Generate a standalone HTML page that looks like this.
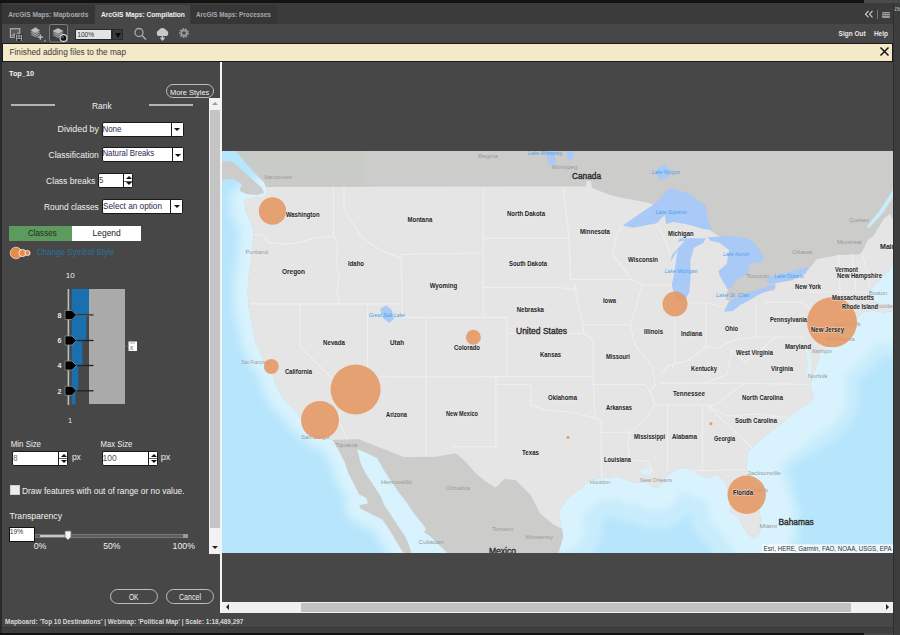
<!DOCTYPE html>
<html><head><meta charset="utf-8">
<style>
*{margin:0;padding:0;box-sizing:border-box}
html,body{width:900px;height:635px;overflow:hidden;background:#474747;font-family:"Liberation Sans",sans-serif}
.a{position:absolute}
.t{position:absolute;white-space:nowrap;line-height:1}
.dd{position:absolute;background:#fff;border:1px solid #1a1a1a;border-radius:2px}
.dd .arr{position:absolute;right:0;top:0;bottom:0;border-left:1px solid #1a1a1a;background:#fff}
.dd .arr:after{content:"";position:absolute;left:50%;top:50%;margin-left:-3px;margin-top:-1px;border-left:3px solid transparent;border-right:3px solid transparent;border-top:3px solid #111}
.dd .v{position:absolute;left:1px;font-size:9.5px;color:#202040;line-height:1}
.spin{position:absolute;right:0;top:0;bottom:0;width:9px;border-left:1px solid #1a1a1a;background:#fff}
.spin:before{content:"";position:absolute;left:1.5px;top:2px;border-left:3px solid transparent;border-right:3px solid transparent;border-bottom:3px solid #111}
.spin:after{content:"";position:absolute;left:1.5px;bottom:2px;border-left:3px solid transparent;border-right:3px solid transparent;border-top:3px solid #111}
.spin i{position:absolute;left:0;right:0;top:50%;border-top:1px solid #666}
.lbl{font-size:10px;color:#f2f2f2}
.btn{position:absolute;border:1.2px solid #bdbdbd;border-radius:8px;color:#f2f2f2;font-size:9px;text-align:center}
</style></head><body>
<!-- top dark strip -->
<div class="a" style="left:0;top:0;width:864px;height:2.5px;background:#121212"></div>
<div class="a" style="left:864px;top:0;width:36px;height:2.5px;background:#4a4a4a"></div>
<!-- tab bar -->
<div class="a" style="left:0;top:2.5px;width:893px;height:21px;background:#3b3b3b"></div>
<div class="a" style="left:0;top:5px;width:95px;height:18.5px;background:#363636"></div>
<div class="a" style="left:95px;top:5px;width:95px;height:18.5px;background:#474747"></div>
<div class="a" style="left:190.5px;top:5px;width:86px;height:18.5px;background:#363636"></div>
<!-- tab bar right icons -->
<svg class="a" style="left:863px;top:9px" width="12" height="10"><path d="M5.5,2 L2.5,5.2 L5.5,8.4 M9.5,2 L6.5,5.2 L9.5,8.4" fill="none" stroke="#d0d0d0" stroke-width="1.1"/></svg>
<div class="a" style="left:877px;top:10px;width:1px;height:9px;background:#777"></div>
<div class="a" style="left:882px;top:11.5px;width:7.5px;height:6px;background:#9a9a9a;border-radius:1px"></div><div class="a" style="left:882px;top:13.3px;width:7.5px;height:0.8px;background:#6a6a6a;box-shadow:0 2px 0 #6a6a6a"></div>
<!-- background window at right -->
<div class="a" style="left:893px;top:2.5px;width:7px;height:632px;background:#3d3d3d;border-left:1px solid #2e2e2e"></div>
<!-- toolbar -->
<div class="a" style="left:0;top:23.5px;width:893px;height:19px;background:#474747"></div>
<div class="a" style="left:0;top:2.5px;width:2px;height:632px;background:#2a2a2a"></div>
<!-- toolbar icons -->
<svg class="a" style="left:8px;top:24px" width="62" height="19">
 <rect x="2.4" y="4.7" width="9.4" height="8.6" fill="#5a5a5a" stroke="#b4b4b4" stroke-width="1.1"/>
 <path d="M3.5,12 L6,9 L8,10.5 L10.5,7.5 L11,12 Z" fill="#9a9a9a"/>
 <rect x="7" y="10.4" width="8" height="6.6" fill="#222"/>
 <g fill="#c8c8c8"><rect x="7.8" y="11.2" width="1.6" height="1.6"/><rect x="10.2" y="11.2" width="1.6" height="1.6"/><rect x="12.6" y="11.2" width="1.6" height="1.6"/>
 <rect x="7.8" y="13.4" width="1.6" height="1.6"/><rect x="10.2" y="13.4" width="1.6" height="1.6"/><rect x="12.6" y="13.4" width="1.6" height="1.6"/>
 <rect x="7.8" y="15.4" width="1.6" height="1.2"/><rect x="12.6" y="15.4" width="1.6" height="1.2"/></g>
 <g stroke="#3a3a3a" stroke-width="0.5">
  <path d="M22,10.6 L27.3,7.6 L32.6,10.6 L27.3,13.6 Z" fill="#9a9a9a"/>
  <path d="M22,8.6 L27.3,5.6 L32.6,8.6 L27.3,11.6 Z" fill="#a4a4a4"/>
  <path d="M22,6.4 L27.3,3 L32.6,6.4 L27.3,9.6 Z" fill="#bdbdbd"/>
 </g>
 <path d="M29.4,13.1 h5.8 M32.3,10.4 v5.4" stroke="#c8c8c8" stroke-width="1.2"/>
 <path d="M35.5,17.5 l2,-2 v2 Z" fill="#bbb"/>
 <rect x="41.5" y="0.5" width="18" height="17.5" rx="2" fill="#3e3e3e" stroke="#7e7e7e" stroke-width="1"/>
 <g stroke="#3a3a3a" stroke-width="0.5">
  <path d="M44,11 L50,7.8 L56,11 L50,14.2 Z" fill="#9a9a9a"/>
  <path d="M44,9 L50,5.8 L56,9 L50,12.2 Z" fill="#a4a4a4"/>
  <path d="M44,7 L50,3.8 L56,7 L50,10.2 Z" fill="#bdbdbd"/>
 </g>
 <circle cx="55.5" cy="14" r="3.4" fill="#111" stroke="#d8d8d8" stroke-width="1.1"/>
 <circle cx="54.6" cy="13.2" r="1.2" fill="#555"/>
</svg>
<div class="a" style="left:75px;top:29px;width:37px;height:10.5px;background:#e4e4e4;border:1px solid #2a2a2a"></div>
<div class="a" style="left:112px;top:28.5px;width:11px;height:11.5px;background:#3a3a3a;border:1px solid #2a2a2a"></div>
<div class="a" style="left:115px;top:32.5px;border-left:3px solid transparent;border-right:3px solid transparent;border-top:5px solid #0a0a0a"></div>
<svg class="a" style="left:132px;top:26px" width="62" height="16">
 <circle cx="7" cy="6.5" r="4" fill="none" stroke="#aaa" stroke-width="1.3"/>
 <path d="M10,9.5 L14,13.5" stroke="#aaa" stroke-width="1.6"/>
 <path d="M26,10 a3.5,3.5 0 0,1 1,-6 a4,4 0 0,1 7,0 a3.5,3.5 0 0,1 1,6 Z" fill="#c8c8c8"/>
 <path d="M30.5,7 v7 M28.5,11.5 l2,2.5 l2,-2.5" stroke="#c8c8c8" stroke-width="1.3" fill="none"/>
 <circle cx="52" cy="7" r="3.6" fill="none" stroke="#9a9a9a" stroke-width="2.6" stroke-dasharray="1.6,0.9"/>
 <circle cx="52" cy="7" r="2.6" fill="none" stroke="#9a9a9a" stroke-width="1.6"/>
</svg>
<!-- notification -->
<div class="a" style="left:2px;top:42.5px;width:891px;height:19.5px;background:#f4e9c9;border:1px solid #1a1a1a"></div>
<svg class="a" style="left:879px;top:46px" width="12" height="12"><path d="M1.5,1.5 L9.5,9.5 M9.5,1.5 L1.5,9.5" stroke="#111" stroke-width="1.5"/></svg>

<!-- left panel -->
<div class="btn" style="left:166px;top:84px;width:48px;height:13.5px;line-height:11px;font-size:8.5px"></div>
<div class="a" style="left:11px;top:104px;width:44px;height:1.6px;background:#b4b4b4"></div>
<div class="a" style="left:149px;top:104px;width:44px;height:1.6px;background:#b4b4b4"></div>

<div class="dd" style="left:101.5px;top:121.5px;width:82px;height:15px"><div class="arr" style="width:12px"></div></div>
<div class="dd" style="left:102px;top:147px;width:82px;height:15px"><div class="arr" style="width:11.5px"></div></div>
<div class="dd" style="left:98px;top:173px;width:35px;height:15px"><div class="spin"><i></i></div></div>
<div class="dd" style="left:102px;top:199px;width:81px;height:14.5px"><div class="arr" style="width:12px"></div></div>

<div class="a" style="left:9px;top:226px;width:63px;height:14.5px;background:#5c9a5e"></div>
<div class="a" style="left:72px;top:226px;width:69px;height:14.5px;background:#fff"></div>

<svg class="a" style="left:9px;top:246px" width="24" height="14">
 <circle cx="7" cy="7" r="5.8" fill="#e98a48" stroke="#fff" stroke-width="0.6"/>
 <circle cx="13.5" cy="7" r="3.6" fill="#e98a48" stroke="#fff" stroke-width="0.8"/>
 <circle cx="18.5" cy="7" r="2.6" fill="#e98a48" stroke="#fff" stroke-width="0.8"/>
</svg>

<!-- class slider graphic -->
<svg class="a" style="left:50px;top:280px" width="95" height="150">
 <rect x="39" y="9" width="36" height="115" fill="#aaaaaa"/>
 <path d="M21.7,9 h17.3 v26 h-2.6 v25.5 h-4 v25 h-4 v25.5 h-3 v13.5 h-3.7 Z" fill="#1a6faf"/>
 <rect x="17.6" y="9" width="1.6" height="116" fill="#bdbdbd"/>
 <g>
  <path d="M26,35 h17.5" stroke="#222" stroke-width="1.3"/><path d="M26,35.6 h17.5" stroke="#888" stroke-width="0.5"/>
  <path d="M26,60.5 h17.5" stroke="#222" stroke-width="1.3"/>
  <path d="M26,85.5 h17.5" stroke="#222" stroke-width="1.3"/>
  <path d="M26,110.8 h17.5" stroke="#222" stroke-width="1.3"/>
 </g>
 <g fill="#000" stroke="#8a8a8a" stroke-width="0.8">
  <path d="M15,30.5 h7 l4.5,4.5 l-4.5,4.5 h-7 Z"/>
  <path d="M15,56 h7 l4.5,4.5 l-4.5,4.5 h-7 Z"/>
  <path d="M15,81 h7 l4.5,4.5 l-4.5,4.5 h-7 Z"/>
  <path d="M15,106.3 h7 l4.5,4.5 l-4.5,4.5 h-7 Z"/>
 </g>
 
 <rect x="78.5" y="61.5" width="8.5" height="9.5" fill="#fff"/>
 <text x="79.5" y="69.5" font-family="Liberation Serif, serif" font-style="italic" font-size="9" fill="#777">x</text>
 <path d="M80,63 h5" stroke="#777" stroke-width="0.6"/>
 <path d="M75,66 h3" stroke="#777" stroke-width="0.5"/>
</svg>

<div class="dd" style="left:12px;top:450.5px;width:56px;height:15px"><div class="spin"><i></i></div></div>
<div class="dd" style="left:102px;top:450.5px;width:56px;height:15px"><div class="spin"><i></i></div></div>

<div class="a" style="left:10px;top:484.5px;width:9.5px;height:10px;background:#ececec;border:1px solid #cfcfcf"></div>

<div class="a" style="left:9px;top:527px;width:25.5px;height:14.5px;background:#fff;border:1px solid #111"></div>
<div class="a" style="left:35px;top:533.5px;width:153px;height:4.5px;background:#5d5d5d;border:1px solid #777"></div>
<div class="a" style="left:40px;top:534.5px;width:28px;height:2.5px;background:#c8c8c8"></div>
<div class="a" style="left:183px;top:533.5px;width:5px;height:4.5px;background:#9a9a9a"></div>
<svg class="a" style="left:64px;top:530px" width="9" height="12"><path d="M1,1 h6 v6 l-3,3 l-3,-3 Z" fill="#f4f4f4" stroke="#777" stroke-width="0.8"/></svg>

<!-- vertical scrollbar -->
<div class="a" style="left:209px;top:98px;width:11.5px;height:455.5px;background:#f2f2f2"></div>
<div class="a" style="left:210px;top:110px;width:9.5px;height:418px;background:#c4c4c4"></div>
<div class="a" style="left:211.5px;top:102px;border-left:3.5px solid transparent;border-right:3.5px solid transparent;border-bottom:3.5px solid #999"></div>
<div class="a" style="left:211.5px;top:546px;border-left:3.5px solid transparent;border-right:3.5px solid transparent;border-top:3.5px solid #222"></div>

<div class="btn" style="left:110px;top:589px;width:47.5px;height:15px;line-height:12.5px"></div>
<div class="btn" style="left:166px;top:589px;width:48px;height:15px;line-height:12.5px"></div>

<!-- divider -->
<div class="a" style="left:220px;top:62px;width:1.8px;height:551px;background:#f4f4f4"></div>

<svg width="900" height="635" style="position:absolute;left:0;top:0">
<defs><clipPath id="mc"><rect x="222" y="151" width="671" height="402"/></clipPath></defs>
<g clip-path="url(#mc)">
<rect x="222" y="151" width="671" height="402" fill="#b7e5fc"/>
<filter id="bl" x="-10%" y="-10%" width="120%" height="120%"><feGaussianBlur stdDeviation="3"/></filter>
<g filter="url(#bl)" fill="none" stroke-linejoin="round" stroke-linecap="round">
<path d="M266.0,187.0 L266.0,195.0 L263.0,197.3 L246.6,198.3 L244.5,200.4 L245.6,211.6 L250.7,221.9 L252.7,228.0 L253.8,234.2 L252.7,242.4 L251.7,256.7 L248.6,275.2 L247.6,291.6 L248.6,308.0 L250.6,317.4 L255.6,342.0 L262.0,357.0 L272.0,369.6 L275.5,384.5 L284.0,399.5 L296.7,412.0 L301.6,420.0 L316.0,432.0 L332.0,440.0 L333.6,441.8 L339.0,450.9 L344.5,461.7 L348.1,472.6 L353.6,483.5 L359.0,494.3 L366.2,498.0 L368.0,503.4 L359.0,505.2 L360.8,508.8 L371.7,514.3 L382.5,519.7 L389.8,530.6 L395.2,539.6 L400.7,548.7 L404.3,553.5" stroke="#c8ecfc" stroke-width="34"/>
<path d="M562.2,528.9 L560.0,518.9 L560.0,510.0 L566.7,498.9 L575.6,492.2 L584.4,485.6 L591.1,480.0 L604.4,477.8 L617.8,476.7 L626.7,480.0 L636.0,483.0 L646.0,482.0 L652.0,486.0 L656.0,489.0 L661.0,485.0 L666.0,477.0 L672.0,472.5 L680.0,468.9 L684.4,467.2 L696.6,473.3 L706.4,478.2 L716.2,474.5 L723.5,479.4 L727.2,488.0 L730.8,512.4 L738.2,517.2 L743.0,527.0 L748.0,534.3 L754.0,539.2 L760.1,531.9 L761.4,519.7 L757.7,505.0 L754.0,490.4 L749.2,478.2 L746.7,468.4 L747.6,451.8 L758.9,441.7 L769.0,432.9 L777.8,426.6 L784.1,421.6 L790.4,415.3 L797.9,410.2 L804.2,406.4 L810.5,401.4 L814.3,396.4 L810.5,387.6 L811.4,380.0 L813.9,373.0 L817.7,363.0 L820.2,352.9 L826.0,347.0 L836.2,341.2 L846.4,330.9 L854.6,320.7 L862.8,312.5 L873.0,310.5 L883.2,312.5 L893.0,311.0 L893.0,305.0 L880.0,304.0" stroke="#c8ecfc" stroke-width="80"/>
<path d="M790.4,415.3 L797.9,410.2 L804.2,406.4 L810.5,401.4 L814.3,396.4 L810.5,387.6 L811.4,380.0 L813.9,373.0 L817.7,363.0 L820.2,352.9 L826.0,347.0 L836.2,341.2 L846.4,330.9 L854.6,320.7 L862.8,312.5 L873.0,310.5 L883.2,312.5 L893.0,311.0 L893.0,305.0 L880.0,304.0 L871.0,299.0 L869.3,292.0 L870.9,288.8 L878.7,281.0 L888.2,271.5 L893.0,263.6" stroke="#c8ecfc" stroke-width="90"/>
<path d="M266.0,187.0 L266.0,195.0 L263.0,197.3 L246.6,198.3 L244.5,200.4 L245.6,211.6 L250.7,221.9 L252.7,228.0 L253.8,234.2 L252.7,242.4 L251.7,256.7 L248.6,275.2 L247.6,291.6 L248.6,308.0 L250.6,317.4 L255.6,342.0 L262.0,357.0 L272.0,369.6 L275.5,384.5 L284.0,399.5 L296.7,412.0 L301.6,420.0 L316.0,432.0 L332.0,440.0 L333.6,441.8 L339.0,450.9 L344.5,461.7 L348.1,472.6 L353.6,483.5 L359.0,494.3 L366.2,498.0 L368.0,503.4 L359.0,505.2 L360.8,508.8 L371.7,514.3 L382.5,519.7 L389.8,530.6 L395.2,539.6 L400.7,548.7 L404.3,553.5" stroke="#d8f3fd" stroke-width="22"/>
<path d="M562.2,528.9 L560.0,518.9 L560.0,510.0 L566.7,498.9 L575.6,492.2 L584.4,485.6 L591.1,480.0 L604.4,477.8 L617.8,476.7 L626.7,480.0 L636.0,483.0 L646.0,482.0 L652.0,486.0 L656.0,489.0 L661.0,485.0 L666.0,477.0 L672.0,472.5 L680.0,468.9 L684.4,467.2 L696.6,473.3 L706.4,478.2 L716.2,474.5 L723.5,479.4 L727.2,488.0 L730.8,512.4 L738.2,517.2 L743.0,527.0 L748.0,534.3 L754.0,539.2 L760.1,531.9 L761.4,519.7 L757.7,505.0 L754.0,490.4 L749.2,478.2 L746.7,468.4 L747.6,451.8 L758.9,441.7 L769.0,432.9 L777.8,426.6 L784.1,421.6 L790.4,415.3 L797.9,410.2 L804.2,406.4 L810.5,401.4 L814.3,396.4 L810.5,387.6 L811.4,380.0 L813.9,373.0 L817.7,363.0 L820.2,352.9 L826.0,347.0 L836.2,341.2 L846.4,330.9 L854.6,320.7 L862.8,312.5 L873.0,310.5 L883.2,312.5 L893.0,311.0 L893.0,305.0 L880.0,304.0 L871.0,299.0 L869.3,292.0 L870.9,288.8 L878.7,281.0 L888.2,271.5 L893.0,263.6" stroke="#d8f3fd" stroke-width="44"/>
<path d="M760.1,531.9 L761.4,519.7 L757.7,505.0 L754.0,490.4 L749.2,478.2 L746.7,468.4 L747.6,451.8 L758.9,441.7 L769.0,432.9 L777.8,426.6 L784.1,421.6 L790.4,415.3 L797.9,410.2 L804.2,406.4 L810.5,401.4 L814.3,396.4 L810.5,387.6 L811.4,380.0 L813.9,373.0 L817.7,363.0 L820.2,352.9 L826.0,347.0 L836.2,341.2 L846.4,330.9 L854.6,320.7 L862.8,312.5 L873.0,310.5 L883.2,312.5 L893.0,311.0 L893.0,305.0 L880.0,304.0 L871.0,299.0 L869.3,292.0 L870.9,288.8 L878.7,281.0 L888.2,271.5 L893.0,263.6" stroke="#d8f3fd" stroke-width="64"/>
<path d="M411.5,553.5 L409.7,546.9 L406.1,537.8 L398.8,527.0 L391.6,516.1 L384.3,505.2 L380.7,496.2 L373.5,485.3 L366.2,474.4 L360.8,463.6 L357.2,449.0 L366.2,452.7 L377.1,458.1 L384.3,470.8 L391.6,481.7 L398.8,492.5 L406.1,501.6 L413.3,512.5 L420.6,521.5 L426.0,528.8 L424.2,532.4 L430.0,536.0 L440.0,546.0 L448.0,553.5 Z" fill="#d8f3fd" stroke="#d8f3fd" stroke-width="10"/>
</g>
<path d="M238.0,151.0 L244.0,161.0 L254.0,172.0 L264.0,182.0 L266.0,187.0 L266.0,195.0 L263.0,197.3 L246.6,198.3 L244.5,200.4 L245.6,211.6 L250.7,221.9 L252.7,228.0 L253.8,234.2 L252.7,242.4 L251.7,256.7 L248.6,275.2 L247.6,291.6 L248.6,308.0 L250.6,317.4 L255.6,342.0 L262.0,357.0 L272.0,369.6 L275.5,384.5 L284.0,399.5 L296.7,412.0 L301.6,420.0 L316.0,432.0 L332.0,440.0 L333.6,441.8 L339.0,450.9 L344.5,461.7 L348.1,472.6 L353.6,483.5 L359.0,494.3 L366.2,498.0 L368.0,503.4 L359.0,505.2 L360.8,508.8 L371.7,514.3 L382.5,519.7 L389.8,530.6 L395.2,539.6 L400.7,548.7 L404.3,553.5 L411.5,553.5 L409.7,546.9 L406.1,537.8 L398.8,527.0 L391.6,516.1 L384.3,505.2 L380.7,496.2 L373.5,485.3 L366.2,474.4 L360.8,463.6 L357.2,449.0 L366.2,452.7 L377.1,458.1 L384.3,470.8 L391.6,481.7 L398.8,492.5 L406.1,501.6 L413.3,512.5 L420.6,521.5 L426.0,528.8 L424.2,532.4 L430.0,536.0 L440.0,546.0 L448.0,553.5 L557.8,555.0 L560.0,547.8 L563.3,536.7 L562.2,528.9 L562.2,528.9 L560.0,518.9 L560.0,510.0 L566.7,498.9 L575.6,492.2 L584.4,485.6 L591.1,480.0 L604.4,477.8 L617.8,476.7 L626.7,480.0 L636.0,483.0 L646.0,482.0 L652.0,486.0 L656.0,489.0 L661.0,485.0 L666.0,477.0 L672.0,472.5 L680.0,468.9 L684.4,467.2 L696.6,473.3 L706.4,478.2 L716.2,474.5 L723.5,479.4 L727.2,488.0 L730.8,512.4 L738.2,517.2 L743.0,527.0 L748.0,534.3 L754.0,539.2 L760.1,531.9 L761.4,519.7 L757.7,505.0 L754.0,490.4 L749.2,478.2 L746.7,468.4 L747.6,451.8 L758.9,441.7 L769.0,432.9 L777.8,426.6 L784.1,421.6 L790.4,415.3 L797.9,410.2 L804.2,406.4 L810.5,401.4 L814.3,396.4 L810.5,387.6 L811.4,380.0 L813.9,373.0 L817.7,363.0 L820.2,352.9 L826.0,347.0 L836.2,341.2 L846.4,330.9 L854.6,320.7 L862.8,312.5 L873.0,310.5 L883.2,312.5 L893.0,311.0 L893.0,305.0 L880.0,304.0 L871.0,299.0 L869.3,292.0 L870.9,288.8 L878.7,281.0 L888.2,271.5 L893.0,263.6 L893.0,151.0 Z" fill="#cccccb"/>
<path d="M222.0,161.0 L233.0,162.0 L244.0,172.0 L255.0,182.0 L261.7,187.5 L264.0,193.0 L257.0,195.0 L246.0,194.0 L239.6,190.8 L241.8,184.0 L233.0,178.7 L222.0,179.7 Z" fill="#cccccb"/>
<path d="M236,151 L365,151 L365,187 L266,187 L264,182 L254,172 L244,161 Z" fill="#c9cbc6"/>
<path d="M266.0,187.0 L586.0,186.5 L586.5,181.0 L591.0,181.0 L592.0,188.0 L610.0,195.0 L625.0,198.5 L645.0,202.0 L652.0,204.0 L668.0,205.0 L690.0,210.0 L705.0,222.0 L712.0,232.0 L735.0,245.0 L750.0,258.0 L745.0,272.0 L733.0,283.0 L727.0,292.0 L726.0,300.0 L735.0,301.0 L760.0,293.0 L775.0,290.0 L776.0,280.0 L795.0,276.0 L808.0,270.0 L817.0,259.0 L839.0,255.0 L860.0,254.2 L863.0,250.0 L867.7,240.0 L873.5,235.7 L884.3,218.3 L890.0,214.0 L893.0,219.6 L893.0,263.6 L888.2,271.5 L878.7,281.0 L870.9,288.8 L869.3,292.0 L871.0,299.0 L880.0,304.0 L893.0,305.0 L893.0,311.0 L883.2,312.5 L873.0,310.5 L862.8,312.5 L854.6,320.7 L846.4,330.9 L836.2,341.2 L826.0,347.0 L820.2,352.9 L817.7,363.0 L813.9,373.0 L811.4,380.0 L810.5,387.6 L814.3,396.4 L810.5,401.4 L804.2,406.4 L797.9,410.2 L790.4,415.3 L784.1,421.6 L777.8,426.6 L769.0,432.9 L758.9,441.7 L747.6,451.8 L746.7,468.4 L749.2,478.2 L754.0,490.4 L757.7,505.0 L761.4,519.7 L760.1,531.9 L754.0,539.2 L748.0,534.3 L743.0,527.0 L738.2,517.2 L730.8,512.4 L727.2,488.0 L723.5,479.4 L716.2,474.5 L706.4,478.2 L696.6,473.3 L684.4,467.2 L680.0,468.9 L672.0,472.5 L666.0,477.0 L661.0,485.0 L656.0,489.0 L652.0,486.0 L646.0,482.0 L636.0,483.0 L626.7,480.0 L617.8,476.7 L604.4,477.8 L591.1,480.0 L584.4,485.6 L575.6,492.2 L566.7,498.9 L560.0,510.0 L560.0,518.9 L562.2,528.9 L553.3,524.4 L540.0,513.3 L531.0,495.6 L515.6,480.0 L504.4,478.9 L495.6,487.8 L485.0,481.0 L475.6,473.3 L466.0,462.0 L455.6,453.3 L435.6,456.7 L404.0,457.0 L358.0,439.0 L332.0,440.0 L332.0,440.0 L316.0,432.0 L301.6,420.0 L296.7,412.0 L284.0,399.5 L275.5,384.5 L272.0,369.6 L262.0,357.0 L255.6,342.0 L250.6,317.4 L248.6,308.0 L247.6,291.6 L248.6,275.2 L251.7,256.7 L252.7,242.4 L253.8,234.2 L252.7,228.0 L250.7,221.9 L245.6,211.6 L244.5,200.4 L246.6,198.3 L263.0,197.3 L266.0,195.0 Z" fill="#e5e5e5"/>
<path d="M866.8,226.3 L880.0,210.0 L893.0,190.0 L893.0,198.0 L882.0,214.0 L869.0,228.0 Z" fill="#c9ecfc"/>
<path d="M622.8,225.5 L638.0,215.0 L656.7,202.2 L668.3,189.3 L673.0,188.2 L689.3,194.0 L705.7,205.7 L708.0,219.7 L710.3,226.7 L712.7,230.2 L703.3,229.0 L687.0,224.3 L673.0,222.0 L666.0,224.3 L664.8,215.0 L661.3,218.5 L656.7,223.2 L645.0,225.5 L633.3,227.8 Z" fill="#a9c9f7"/>
<path d="M677.7,241.8 L680.0,238.3 L705.7,238.3 L703.3,243.0 L694.0,247.7 L690.5,259.3 L690.5,278.0 L689.3,292.0 L684.7,301.3 L680.0,301.3 L674.2,294.3 L671.8,285.0 L674.2,273.3 L677.7,250.0 L670.7,261.7 L672.0,255.0 L684.7,240.7 Z" fill="#a9c9f7"/>
<path d="M708.0,237.2 L726.7,236.0 L747.7,238.3 L754.7,243.0 L764.0,257.0 L761.7,261.7 L750.0,264.0 L747.7,273.3 L736.0,280.3 L731.3,287.3 L727.8,289.7 L719.7,275.7 L718.5,271.0 L726.7,264.0 L729.0,250.0 L719.7,243.0 L710.3,240.7 Z" fill="#a9c9f7"/>
<path d="M724.0,311.5 L729.0,301.5 L741.0,295.0 L760.0,289.0 L773.0,284.5 L776.0,287.0 L760.0,294.0 L750.0,300.0 L740.0,305.0 L733.0,311.0 Z" fill="#a9c9f7"/>
<path d="M766.3,280.3 L773.3,275.7 L787.3,272.2 L801.3,268.7 L808.3,267.5 L806.0,273.3 L792.0,280.3 L778.0,282.7 L768.7,283.8 Z" fill="#a9c9f7"/>
<path d="M658.0,168.0 L664.0,164.0 L670.0,170.0 L668.0,178.0 L660.0,180.0 L656.0,174.0 Z" fill="#a9c9f7"/>
<path d="M546.0,151.0 L552.0,151.0 L556.0,160.0 L554.0,166.0 L548.0,163.0 Z" fill="#a9c9f7"/>
<path d="M566.0,151.0 L574.0,151.0 L573.0,158.0 L570.0,162.0 L567.0,157.0 Z" fill="#a9c9f7"/>
<path d="M380.0,309.0 L386.0,305.5 L392.0,310.0 L394.0,319.0 L389.0,323.0 L383.0,318.0 Z" fill="#a9c9f7"/>
<path d="M640.0,470.0 L646.0,468.5 L652.0,470.0 L650.0,474.0 L643.0,474.0 Z" fill="#d8f3fd"/>
<path d="M805.0,349.0 L808.0,349.0 L811.0,358.0 L812.0,368.0 L809.0,378.0 L806.0,376.0 L808.0,366.0 L807.0,356.0 Z" fill="#d8f3fd"/>
<g fill="none" stroke="#efefef" stroke-width="1.1">
<path d="M252.7,234.2 L263.0,235.2 L269.0,242.4 L283.5,244.4 L299.9,242.4 L310.1,239.3 L322.0,237.3 L334.0,237.0"/>
<path d="M333.5,187.0 L333.5,236.0 L338.0,245.0 L336.0,260.0 L339.0,275.0 L337.0,290.0 L340.0,303.0"/>
<path d="M344.0,187.0 L344.0,208.5 L352.0,222.0 L360.0,235.0 L372.0,245.0 L385.0,252.0 L401.0,258.0"/>
<path d="M401.0,254.5 L402.4,303.0"/>
<path d="M401.0,254.5 L483.3,253.0"/>
<path d="M483.3,187.0 L483.3,317.4"/>
<path d="M250.7,303.9 L402.4,303.9"/>
<path d="M299.6,303.9 L299.6,346.0 L331.2,377.6 L340.0,386.0 L343.0,400.0 L338.0,420.0 L348.0,440.0"/>
<path d="M367.6,303.0 L367.6,377.0 L360.0,390.0 L345.0,397.0"/>
<path d="M367.6,377.0 L507.0,376.6"/>
<path d="M402.4,303.0 L402.4,317.4 L507.0,317.4 L507.0,376.6"/>
<path d="M426.0,317.4 L426.0,457.0"/>
<path d="M507.0,333.5 L584.0,333.5 L593.0,340.0 L593.0,376.6 L595.0,420.0"/>
<path d="M495.8,376.6 L495.8,446.7 L453.0,446.7"/>
<path d="M495.8,384.5 L530.6,384.5 L530.6,405.0 L545.0,410.0 L570.0,412.0 L595.0,418.0 L601.0,420.0 L601.6,478.5"/>
<path d="M507.0,376.6 L593.0,376.6"/>
<path d="M483.3,238.4 L570.0,238.4"/>
<path d="M563.0,187.0 L566.0,210.0 L569.0,238.4 L570.5,279.5 L631.5,279.5"/>
<path d="M483.3,287.5 L560.0,287.5 L575.0,290.0"/>
<path d="M575.0,285.0 L577.0,300.0 L583.0,324.0 L584.0,333.5"/>
<path d="M583.0,324.8 L630.0,324.8"/>
<path d="M621.5,227.0 L615.0,240.0 L613.0,254.5 L631.5,279.5 L642.6,285.0 L638.0,300.0 L630.0,324.8 L635.0,344.7 L652.6,367.0 L655.0,384.5 L650.0,392.0 L655.0,405.0 L645.0,420.0 L630.0,432.4 L627.7,445.0 L630.0,460.0 L647.6,461.0 L652.6,472.0"/>
<path d="M642.6,285.0 L672.0,285.0"/>
<path d="M656.7,223.2 L665.0,240.0 L671.0,255.0"/>
<path d="M593.0,384.5 L645.0,384.5 L650.0,392.0"/>
<path d="M601.0,432.4 L630.0,432.4"/>
<path d="M667.5,405.0 L667.5,470.0"/>
<path d="M702.4,405.0 L702.4,469.8"/>
<path d="M680.0,471.0 L745.9,469.8"/>
<path d="M708.0,406.0 L752.0,448.0"/>
<path d="M708.0,406.0 L728.0,416.0 L756.0,414.0 L788.0,418.0"/>
<path d="M655.0,405.0 L715.0,405.0 L744.7,383.3"/>
<path d="M660.0,383.3 L744.7,383.3 L809.0,384.5"/>
<path d="M675.0,303.0 L675.0,359.7 L672.0,370.0"/>
<path d="M706.0,303.0 L706.0,349.7"/>
<path d="M660.7,375.0 L668.0,365.6 L687.6,360.7 L707.0,346.0 L717.0,348.5 L731.6,341.0 L739.0,338.7 L756.0,337.0"/>
<path d="M756.0,301.0 L756.0,337.0 L804.0,337.0"/>
<path d="M764.5,302.4 L802.0,302.4 L815.0,312.0"/>
<path d="M732.0,350.0 L744.7,362.0 L759.6,352.0 L772.0,339.7 L777.0,337.0"/>
<path d="M732.0,350.0 L727.0,374.6 L714.8,379.6 L705.0,383.3"/>
<path d="M675.0,303.0 L706.0,303.0 L723.5,307.0"/>
<path d="M838.7,254.5 L840.0,292.0"/>
<path d="M852.0,254.3 L856.0,292.0"/>
<path d="M862.8,254.4 L870.0,288.0"/>
<path d="M810.0,292.0 L869.0,292.0"/>
<path d="M840.0,292.0 L842.0,314.0"/>
</g>
<g font-family="Liberation Sans, sans-serif" font-size="5.8" fill="#999999">
<text x="264" y="179.4" textLength="28.0" lengthAdjust="spacingAndGlyphs">Vancouver</text>
<text x="245.6" y="254.0" textLength="22.4" lengthAdjust="spacingAndGlyphs">Portland</text>
<text x="241.4" y="364.0" textLength="28.6" lengthAdjust="spacingAndGlyphs">San Francisco</text>
<text x="301" y="439.4" textLength="28.0" lengthAdjust="spacingAndGlyphs">San Diego</text>
<text x="335" y="447.0" textLength="22.6" lengthAdjust="spacingAndGlyphs">Tijuana</text>
<text x="381" y="484.0" textLength="31.0" lengthAdjust="spacingAndGlyphs">Hermosillo</text>
<text x="418.6" y="544.0" textLength="24.9" lengthAdjust="spacingAndGlyphs">Culiacan</text>
<text x="446" y="490.0" textLength="24.0" lengthAdjust="spacingAndGlyphs">Chihuahua</text>
<text x="492" y="531.0" textLength="21.0" lengthAdjust="spacingAndGlyphs">Torreon</text>
<text x="525.6" y="539.0" textLength="27.4" lengthAdjust="spacingAndGlyphs">Monterrey</text>
<text x="590" y="483.7" textLength="20.0" lengthAdjust="spacingAndGlyphs">Houston</text>
<text x="640" y="482.0" textLength="32.0" lengthAdjust="spacingAndGlyphs">New Orleans</text>
<text x="747.6" y="474.8" textLength="33.1" lengthAdjust="spacingAndGlyphs">Jacksonville</text>
<text x="753" y="492.0" textLength="15.0" lengthAdjust="spacingAndGlyphs">Orlando</text>
<text x="759.6" y="527.8" textLength="17.4" lengthAdjust="spacingAndGlyphs">Miami</text>
<text x="807.5" y="378.3" textLength="20.1" lengthAdjust="spacingAndGlyphs">Norfolk</text>
<text x="812" y="353.0" textLength="20.0" lengthAdjust="spacingAndGlyphs">Washington</text>
<text x="826" y="341.0" textLength="28.6" lengthAdjust="spacingAndGlyphs">Philadelphia</text>
<text x="834" y="325.8" textLength="26.7" lengthAdjust="spacingAndGlyphs">New York</text>
<text x="869" y="295.0" textLength="18.3" lengthAdjust="spacingAndGlyphs">Boston</text>
<text x="875" y="308.4" textLength="25.0" lengthAdjust="spacingAndGlyphs">Providence</text>
<text x="746" y="277.7" textLength="23.6" lengthAdjust="spacingAndGlyphs">Toronto</text>
<text x="792" y="254.0" textLength="20.0" lengthAdjust="spacingAndGlyphs">Ottawa</text>
<text x="837" y="244.0" textLength="24.6" lengthAdjust="spacingAndGlyphs">Montreal</text>
<text x="849" y="222.0" textLength="20.0" lengthAdjust="spacingAndGlyphs">Quebec</text>
<text x="478" y="158.0" textLength="20.0" lengthAdjust="spacingAndGlyphs">Regina</text>
<text x="551.8" y="169.0" textLength="25.6" lengthAdjust="spacingAndGlyphs">Winnipeg</text>
</g>
<g font-family="Liberation Sans, sans-serif" font-size="5.8" font-style="italic" fill="#4aa3e6">
<text x="655.5" y="214.2" textLength="31.5" lengthAdjust="spacingAndGlyphs">Lake Superior</text>
<text x="723" y="256.2" textLength="26.0" lengthAdjust="spacingAndGlyphs">Lake Huron</text>
<text x="664.8" y="272.5" textLength="32.7" lengthAdjust="spacingAndGlyphs">Lake Michigan</text>
<text x="774.5" y="278.4" textLength="29.2" lengthAdjust="spacingAndGlyphs">Lake Ontario</text>
<text x="716" y="297.0" textLength="33.5" lengthAdjust="spacingAndGlyphs">Lake St. Clair</text>
<text x="368.8" y="317.4" textLength="36.2" lengthAdjust="spacingAndGlyphs">Great Salt Lake</text>
<text x="652" y="174.0" textLength="28.0" lengthAdjust="spacingAndGlyphs">Lake Nipigon</text>
<text x="528" y="154.5" textLength="34.0" lengthAdjust="spacingAndGlyphs">Lake Winnipeg</text>
</g>
<circle cx="272.5" cy="211" r="13.7" fill="#e5955f" fill-opacity="0.86"/>
<circle cx="271.3" cy="366.4" r="7.5" fill="#e5955f" fill-opacity="0.86"/>
<circle cx="355.6" cy="389.5" r="25" fill="#e5955f" fill-opacity="0.86"/>
<circle cx="320" cy="420" r="19" fill="#e5955f" fill-opacity="0.86"/>
<circle cx="473.4" cy="337.3" r="7.5" fill="#e5955f" fill-opacity="0.86"/>
<circle cx="675" cy="304" r="12.5" fill="#e5955f" fill-opacity="0.86"/>
<circle cx="832" cy="322.3" r="25" fill="#e5955f" fill-opacity="0.86"/>
<circle cx="746.7" cy="494.7" r="19.2" fill="#e5955f" fill-opacity="0.86"/>
<circle cx="568" cy="437.4" r="1.6" fill="#e5955f" fill-opacity="0.86"/>
<circle cx="711" cy="423.7" r="1.6" fill="#e5955f" fill-opacity="0.86"/>
<g font-family="Liberation Sans, sans-serif" font-size="7" font-weight="bold" fill="#1e1e1e" stroke="#efefef" stroke-opacity="0.55" stroke-width="1.4" paint-order="stroke" stroke-linejoin="round">
<text x="286" y="217.2" textLength="33.5" lengthAdjust="spacingAndGlyphs">Washington</text>
<text x="407.4" y="222.2" textLength="24.9" lengthAdjust="spacingAndGlyphs">Montana</text>
<text x="348" y="266.2" textLength="16.0" lengthAdjust="spacingAndGlyphs">Idaho</text>
<text x="282" y="274.2" textLength="23.0" lengthAdjust="spacingAndGlyphs">Oregon</text>
<text x="507" y="216.2" textLength="38.0" lengthAdjust="spacingAndGlyphs">North Dakota</text>
<text x="509" y="266.2" textLength="38.0" lengthAdjust="spacingAndGlyphs">South Dakota</text>
<text x="580" y="234.2" textLength="30.0" lengthAdjust="spacingAndGlyphs">Minnesota</text>
<text x="628" y="262.2" textLength="30.0" lengthAdjust="spacingAndGlyphs">Wisconsin</text>
<text x="668" y="235.9" textLength="25.5" lengthAdjust="spacingAndGlyphs">Michigan</text>
<text x="323" y="345.2" textLength="22.0" lengthAdjust="spacingAndGlyphs">Nevada</text>
<text x="390" y="345.2" textLength="14.0" lengthAdjust="spacingAndGlyphs">Utah</text>
<text x="285" y="374.2" textLength="27.0" lengthAdjust="spacingAndGlyphs">California</text>
<text x="386" y="417.2" textLength="21.0" lengthAdjust="spacingAndGlyphs">Arizona</text>
<text x="429.7" y="288.4" textLength="27.5" lengthAdjust="spacingAndGlyphs">Wyoming</text>
<text x="516.7" y="312.2" textLength="27.2" lengthAdjust="spacingAndGlyphs">Nebraska</text>
<text x="603" y="303.2" textLength="13.0" lengthAdjust="spacingAndGlyphs">Iowa</text>
<text x="644" y="334.2" textLength="19.0" lengthAdjust="spacingAndGlyphs">Illinois</text>
<text x="454" y="350.2" textLength="26.0" lengthAdjust="spacingAndGlyphs">Colorado</text>
<text x="540" y="357.2" textLength="21.0" lengthAdjust="spacingAndGlyphs">Kansas</text>
<text x="606" y="359.2" textLength="24.0" lengthAdjust="spacingAndGlyphs">Missouri</text>
<text x="548" y="400.2" textLength="29.0" lengthAdjust="spacingAndGlyphs">Oklahoma</text>
<text x="606" y="410.2" textLength="26.0" lengthAdjust="spacingAndGlyphs">Arkansas</text>
<text x="446" y="416.2" textLength="32.0" lengthAdjust="spacingAndGlyphs">New Mexico</text>
<text x="795" y="289.2" textLength="26.0" lengthAdjust="spacingAndGlyphs">New York</text>
<text x="832" y="300.2" textLength="42.0" lengthAdjust="spacingAndGlyphs">Massachusetts</text>
<text x="842" y="309.2" textLength="36.0" lengthAdjust="spacingAndGlyphs">Rhode Island</text>
<text x="770" y="322.2" textLength="37.0" lengthAdjust="spacingAndGlyphs">Pennsylvania</text>
<text x="811" y="332.2" textLength="33.0" lengthAdjust="spacingAndGlyphs">New Jersey</text>
<text x="725" y="331.2" textLength="13.0" lengthAdjust="spacingAndGlyphs">Ohio</text>
<text x="681" y="336.2" textLength="21.0" lengthAdjust="spacingAndGlyphs">Indiana</text>
<text x="785" y="349.2" textLength="26.0" lengthAdjust="spacingAndGlyphs">Maryland</text>
<text x="736" y="355.2" textLength="37.0" lengthAdjust="spacingAndGlyphs">West Virginia</text>
<text x="771" y="371.2" textLength="22.0" lengthAdjust="spacingAndGlyphs">Virginia</text>
<text x="691" y="371.2" textLength="26.0" lengthAdjust="spacingAndGlyphs">Kentucky</text>
<text x="673" y="396.2" textLength="32.0" lengthAdjust="spacingAndGlyphs">Tennessee</text>
<text x="742" y="400.2" textLength="41.0" lengthAdjust="spacingAndGlyphs">North Carolina</text>
<text x="835" y="272.2" textLength="23.0" lengthAdjust="spacingAndGlyphs">Vermont</text>
<text x="837" y="278.2" textLength="45.0" lengthAdjust="spacingAndGlyphs">New Hampshire</text>
<text x="880" y="249.2" textLength="20.0" lengthAdjust="spacingAndGlyphs">Maine</text>
<text x="522" y="455.2" textLength="17.0" lengthAdjust="spacingAndGlyphs">Texas</text>
<text x="604" y="462.2" textLength="27.0" lengthAdjust="spacingAndGlyphs">Louisiana</text>
<text x="634" y="439.2" textLength="31.0" lengthAdjust="spacingAndGlyphs">Mississippi</text>
<text x="672" y="439.2" textLength="25.0" lengthAdjust="spacingAndGlyphs">Alabama</text>
<text x="714" y="441.2" textLength="21.0" lengthAdjust="spacingAndGlyphs">Georgia</text>
<text x="735" y="423.2" textLength="42.0" lengthAdjust="spacingAndGlyphs">South Carolina</text>
<text x="733" y="495.2" textLength="20.0" lengthAdjust="spacingAndGlyphs">Florida</text>
</g>
<g font-family="Liberation Sans, sans-serif" font-size="8.8" fill="#2a2a2a" stroke="#2a2a2a" stroke-width="0.35">
<text x="572" y="179.2" textLength="29.0" lengthAdjust="spacingAndGlyphs">Canada</text>
<text x="516" y="334.2" textLength="51.0" lengthAdjust="spacingAndGlyphs">United States</text>
<text x="489" y="554.2" textLength="27.0" lengthAdjust="spacingAndGlyphs">Mexico</text>
<text x="778.4" y="525.2" textLength="35.4" lengthAdjust="spacingAndGlyphs">Bahamas</text>
</g>
<rect x="762" y="544.4" width="131" height="9" fill="#fff" fill-opacity="0.75"/>
<text x="763.6" y="550.6" font-family="Liberation Sans, sans-serif" font-size="6.6" fill="#333" textLength="128" lengthAdjust="spacingAndGlyphs">Esri, HERE, Garmin, FAO, NOAA, USGS, EPA</text>
</g></svg>

<!-- horizontal scrollbar -->
<div class="a" style="left:222px;top:601.5px;width:671px;height:11.5px;background:#f0f0f0"></div>
<div class="a" style="left:301px;top:603px;width:550px;height:8.5px;background:#c2c2c2"></div>
<div class="a" style="left:226px;top:604px;border-top:3.5px solid transparent;border-bottom:3.5px solid transparent;border-right:3.5px solid #222"></div>
<div class="a" style="left:886px;top:604px;border-top:3.5px solid transparent;border-bottom:3.5px solid transparent;border-left:3.5px solid #222"></div>

<!-- status bar -->
<div class="a" style="left:2px;top:626.5px;width:891px;height:1px;background:#363636"></div>
<div class="a" style="left:2px;top:627.5px;width:891px;height:5px;background:#3e3e3e"></div>
<div class="a" style="left:0;top:632.5px;width:864px;height:2.5px;background:#121212"></div>
<svg width="900" height="635" style="position:absolute;left:0;top:0" font-family="Liberation Sans, sans-serif">
<text x="8.3" y="17" font-size="8" font-weight="bold" fill="#a3abb3" textLength="80.0" lengthAdjust="spacingAndGlyphs">ArcGIS Maps: Mapboards</text>
<text x="101" y="17" font-size="8" font-weight="bold" fill="#f2f2f2" textLength="83.9" lengthAdjust="spacingAndGlyphs">ArcGIS Maps: Compilation</text>
<text x="196" y="17" font-size="8" font-weight="bold" fill="#a3abb3" textLength="74.7" lengthAdjust="spacingAndGlyphs">ArcGIS Maps: Processes</text>
<text x="838.6" y="35.8" font-size="8" font-weight="bold" fill="#e8e8e8" textLength="27.0" lengthAdjust="spacingAndGlyphs">Sign Out</text>
<text x="873.9" y="35.8" font-size="8" font-weight="bold" fill="#e8e8e8" textLength="14.1" lengthAdjust="spacingAndGlyphs">Help</text>
<text x="77.2" y="37" font-size="7.5" font-weight="normal" fill="#333" textLength="17.1" lengthAdjust="spacingAndGlyphs">100%</text>
<text x="9.5" y="54.8" font-size="8.3" font-weight="normal" fill="#3a3a3a" textLength="116.5" lengthAdjust="spacingAndGlyphs">Finished adding files to the map</text>
<text x="9" y="76" font-size="7.2" font-weight="bold" fill="#f4f4f4" textLength="25.0" lengthAdjust="spacingAndGlyphs">Top_10</text>
<text x="170" y="94.5" font-size="8" font-weight="normal" fill="#f0f0f0" textLength="39.3" lengthAdjust="spacingAndGlyphs">More Styles</text>
<text x="92" y="108.5" font-size="9" font-weight="normal" fill="#f0f0f0" textLength="19.6" lengthAdjust="spacingAndGlyphs">Rank</text>
<text x="57.5" y="132.3" font-size="9.6" font-weight="normal" fill="#f0f0f0" textLength="41.5" lengthAdjust="spacingAndGlyphs">Divided by</text>
<text x="48.5" y="158.2" font-size="9.6" font-weight="normal" fill="#f0f0f0" textLength="50.3" lengthAdjust="spacingAndGlyphs">Classification</text>
<text x="46.1" y="183.9" font-size="9.6" font-weight="normal" fill="#f0f0f0" textLength="49.2" lengthAdjust="spacingAndGlyphs">Class breaks</text>
<text x="44" y="209.5" font-size="9.6" font-weight="normal" fill="#f0f0f0" textLength="54.8" lengthAdjust="spacingAndGlyphs">Round classes</text>
<text x="102.4" y="132" font-size="9" font-weight="normal" fill="#2a2a50" textLength="19.0" lengthAdjust="spacingAndGlyphs">None</text>
<text x="102.4" y="155.5" font-size="9" font-weight="normal" fill="#2a2a50" textLength="51.8" lengthAdjust="spacingAndGlyphs">Natural Breaks</text>
<text x="99.1" y="182.8" font-size="9" font-weight="normal" fill="#444" textLength="4.4" lengthAdjust="spacingAndGlyphs">5</text>
<text x="103" y="209.2" font-size="9" font-weight="normal" fill="#2a2a50" textLength="59.0" lengthAdjust="spacingAndGlyphs">Select an option</text>
<text x="28" y="236.3" font-size="9.4" font-weight="normal" fill="#1e2e1e" textLength="28.7" lengthAdjust="spacingAndGlyphs">Classes</text>
<text x="92.5" y="236.3" font-size="9.4" font-weight="normal" fill="#222" textLength="28.3" lengthAdjust="spacingAndGlyphs">Legend</text>
<text x="36.7" y="255" font-size="9.4" font-weight="normal" fill="#2a72a0" textLength="77.5" lengthAdjust="spacingAndGlyphs">Change Symbol Style</text>
<text x="65.8" y="278" font-size="8" font-weight="normal" fill="#f0f0f0" textLength="8.9" lengthAdjust="spacingAndGlyphs">10</text>
<text x="57.5" y="318" font-size="7.5" font-weight="bold" fill="#e8e8e8" textLength="4.0" lengthAdjust="spacingAndGlyphs">8</text>
<text x="57.5" y="343.3" font-size="7.5" font-weight="bold" fill="#e8e8e8" textLength="4.0" lengthAdjust="spacingAndGlyphs">6</text>
<text x="57.5" y="368" font-size="7.5" font-weight="bold" fill="#e8e8e8" textLength="4.0" lengthAdjust="spacingAndGlyphs">4</text>
<text x="57.5" y="393.6" font-size="7.5" font-weight="bold" fill="#e8e8e8" textLength="4.0" lengthAdjust="spacingAndGlyphs">2</text>
<text x="68.3" y="423" font-size="8" font-weight="normal" fill="#f0f0f0" textLength="3.7" lengthAdjust="spacingAndGlyphs">1</text>
<text x="10.8" y="446.5" font-size="9" font-weight="normal" fill="#f0f0f0" textLength="30.2" lengthAdjust="spacingAndGlyphs">Min Size</text>
<text x="100.6" y="446.5" font-size="9" font-weight="normal" fill="#f0f0f0" textLength="31.7" lengthAdjust="spacingAndGlyphs">Max Size</text>
<text x="13.2" y="460.6" font-size="9" font-weight="normal" fill="#666" textLength="4.3" lengthAdjust="spacingAndGlyphs">8</text>
<text x="102.6" y="460.6" font-size="9" font-weight="normal" fill="#555" textLength="14.2" lengthAdjust="spacingAndGlyphs">100</text>
<text x="71.9" y="460" font-size="9.5" font-weight="normal" fill="#e8e8e8" textLength="9.0" lengthAdjust="spacingAndGlyphs">px</text>
<text x="160.7" y="460" font-size="9.5" font-weight="normal" fill="#e8e8e8" textLength="9.7" lengthAdjust="spacingAndGlyphs">px</text>
<text x="22" y="493.5" font-size="9.5" font-weight="normal" fill="#f0f0f0" textLength="162.6" lengthAdjust="spacingAndGlyphs">Draw features with out of range or no value.</text>
<text x="9.5" y="519" font-size="9.6" font-weight="normal" fill="#f0f0f0" textLength="52.5" lengthAdjust="spacingAndGlyphs">Transparency</text>
<text x="9.8" y="534.2" font-size="6.5" font-weight="normal" fill="#333" textLength="13.4" lengthAdjust="spacingAndGlyphs">19%</text>
<text x="33.7" y="548.9" font-size="9" font-weight="normal" fill="#f0f0f0" textLength="12.8" lengthAdjust="spacingAndGlyphs">0%</text>
<text x="103.2" y="548.9" font-size="9" font-weight="normal" fill="#f0f0f0" textLength="17.3" lengthAdjust="spacingAndGlyphs">50%</text>
<text x="172.6" y="548.9" font-size="9" font-weight="normal" fill="#f0f0f0" textLength="22.3" lengthAdjust="spacingAndGlyphs">100%</text>
<text x="128.9" y="599.8" font-size="9" font-weight="normal" fill="#f0f0f0" textLength="9.7" lengthAdjust="spacingAndGlyphs">OK</text>
<text x="179" y="599.8" font-size="9" font-weight="normal" fill="#f0f0f0" textLength="22.0" lengthAdjust="spacingAndGlyphs">Cancel</text>
<text x="894" y="11" font-size="8" font-weight="normal" fill="#8fa3b3" textLength="10.0" lengthAdjust="spacingAndGlyphs">ar</text>
<text x="5.1" y="623.7" font-size="7.5" font-weight="bold" fill="#d8d8d8" textLength="238.2" lengthAdjust="spacingAndGlyphs">Mapboard: 'Top 10 Destinations' | Webmap: 'Political Map' | Scale: 1:18,489,297</text>
</svg>
</body></html>
